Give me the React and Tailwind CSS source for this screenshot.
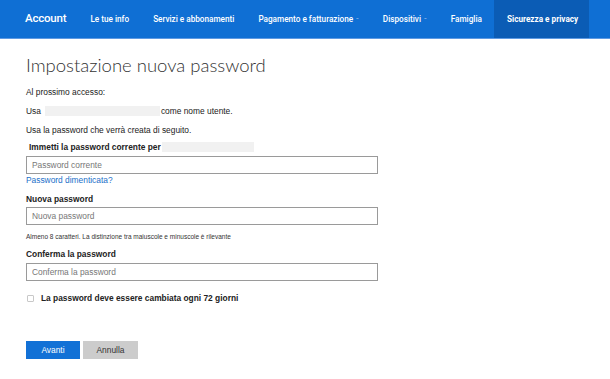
import { useState } from "react";

const navItems = [
  { label: "Le tue info" },
  { label: "Servizi e abbonamenti" },
  { label: "Pagamento e fatturazione", caret: true },
  { label: "Dispositivi", caret: true },
  { label: "Famiglia" },
  { label: "Sicurezza e privacy", active: true },
];

const Navbar = () => (
  <div className="flex h-[39px] items-stretch whitespace-nowrap bg-[#0f6fd4] border-b border-[#5e9ae3] text-white" style={{ fontFamily: 'Roboto, sans-serif' }}>
    <div className="flex items-center pl-[25px] pr-[12px] text-[11.5px] font-medium tracking-[-0.2px]">Account</div>
    {navItems.map(item => (
      <div
        key={item.label}
        className={
          item.active
            ? "flex items-center pl-[13px] pr-[11px] text-[8.2px] font-bold bg-[#0b5cb5]"
            : "flex items-center px-[12px] text-[8.2px] font-medium"
        }
      >
        {item.label}
        {item.caret && <span className="ml-[3px] text-[#8fb8ec] text-[8px]">-</span>}
      </div>
    ))}
  </div>
)

const App = () => {
  const [current, setCurrent] = useState('')
  const [newPassword, setNewPassword] = useState('')
  const [confirm, setConfirm] = useState('')
  const [expire, setExpire] = useState(false)

  return (
    <div className="h-[379px] w-[610px] bg-white overflow-hidden" style={{ fontFamily: '"Liberation Sans", Arial, sans-serif' }}>
      <Navbar/>
      <div className="pl-[26px] text-[#222]">
        <h1 className="mt-[12px] text-[18.5px] font-light text-[#333] leading-[28px]" style={{ fontFamily: 'Lato, sans-serif' }}>
          Impostazione nuova password
        </h1>
        <p className="mt-[7px] text-[8.4px] leading-[12px]">Al prossimo accesso:</p>
        <p className="mt-[7px] flex items-center text-[8.4px] leading-[12px]">
          Usa
          <span className="ml-[4px] mr-[1px] inline-block h-[10px] w-[115px] bg-[#f1f1f1]"></span>
          come nome utente.
        </p>
        <p className="mt-[7px] text-[8.4px] leading-[12px]">Usa la password che verrà creata di seguito.</p>
        <p className="mt-[5px] flex items-center pl-[3px] text-[8.4px] font-bold leading-[12px]">
          Immetti la password corrente per
          <span className="ml-[1px] inline-block h-[10px] w-[92px] bg-[#f1f1f1]"></span>
        </p>
        <input
          type="password"
          className="mt-[3px] block h-[18px] w-[352px] border border-[#9a9a9a] px-[5px] text-[8.4px] placeholder:text-[#777] outline-none"
          value={current}
          onChange={e => setCurrent(e.target.value)}
          placeholder="Password corrente"
        />
        <a href="#" className="block text-[8.4px] leading-[12px] text-[#1a6fc9]">Password dimenticata?</a>
        <p className="mt-[7px] text-[8.4px] font-bold leading-[12px]">Nuova password</p>
        <input
          type="password"
          className="mt-[2px] block h-[18px] w-[352px] border border-[#9a9a9a] px-[5px] text-[8.4px] placeholder:text-[#777] outline-none"
          value={newPassword}
          onChange={e => setNewPassword(e.target.value)}
          placeholder="Nuova password"
        />
        <p className="mt-[7px] text-[6.5px] leading-[10px] text-[#333]">Almeno 8 caratteri. La distinzione tra maiuscole e minuscole è rilevante</p>
        <p className="mt-[6px] text-[8.4px] font-bold leading-[12px]">Conferma la password</p>
        <input
          type="password"
          className="mt-[3px] block h-[18px] w-[352px] border border-[#9a9a9a] px-[5px] text-[8.4px] placeholder:text-[#777] outline-none"
          value={confirm}
          onChange={e => setConfirm(e.target.value)}
          placeholder="Conferma la password"
        />
        <label className="mt-[11px] flex items-center text-[8.4px] font-bold leading-[12px]">
          <input
            type="checkbox"
            className="ml-[1px] mr-[7px] h-[7px] w-[7px] appearance-none rounded-[1px] border border-[#c8c8c8] bg-white"
            checked={expire}
            onChange={e => setExpire(e.target.checked)}
          />
          La password deve essere cambiata ogni 72 giorni
        </label>
        <div className="mt-[37px] flex gap-[3px]">
          <button className="h-[18px] w-[54px] bg-[#1271d6] text-[8.4px] text-white">Avanti</button>
          <button className="h-[18px] w-[55px] bg-[#cccccc] text-[8.4px] text-[#333]">Annulla</button>
        </div>
      </div>
    </div>
  )
}

export default App
